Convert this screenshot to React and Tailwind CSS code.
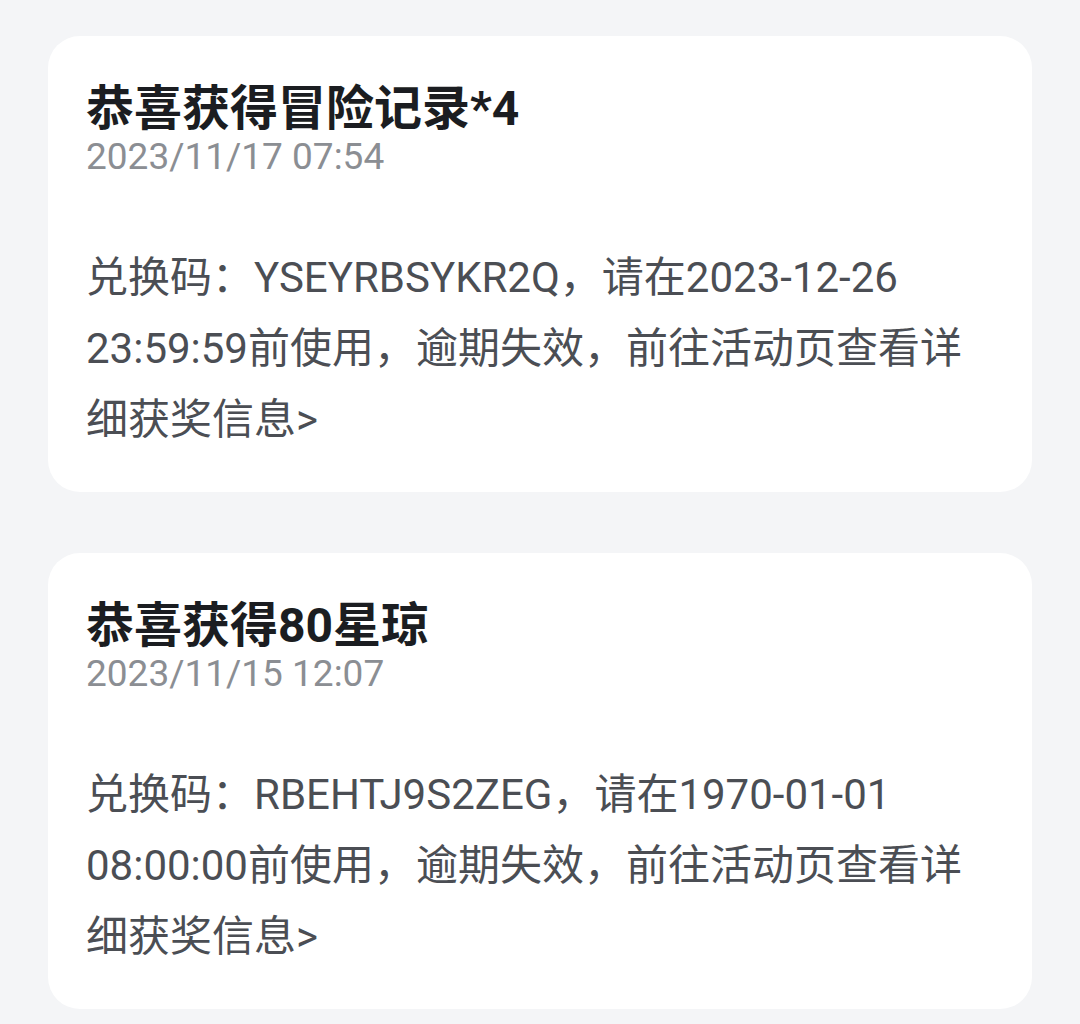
import React from "react";

const messages = [
  {
    title: "恭喜获得冒险记录*4",
    time: "2023/11/17 07:54",
    body: "兑换码：YSEYRBSYKR2Q，请在2023-12-26 23:59:59前使用，逾期失效，前往活动页查看详细获奖信息>",
  },
  {
    title: "恭喜获得80星琼",
    time: "2023/11/15 12:07",
    body: "兑换码：RBEHTJ9S2ZEG，请在1970-01-01 08:00:00前使用，逾期失效，前往活动页查看详细获奖信息>",
  },
];

export default function App() {
  return (
    <div
      className="min-h-screen bg-[#f4f5f7] px-[48px] pt-[36px] flex flex-col gap-[61px]"
      style={{ fontFamily: 'Roboto, "Noto Sans CJK SC", sans-serif' }}
    >
      {messages.map((m) => (
        <div key={m.time} className="bg-white rounded-[32px] pl-[38px] pr-[50px] pt-[45px] pb-[37px]">
          <h2 className="text-[48px] leading-[56px] font-bold text-[#1b1d21]">{m.title}</h2>
          <p className="text-[37px] leading-[40px] text-[#8b8e93]">{m.time}</p>
          <p className="mt-[65px] text-[42px] leading-[71px] text-[#4b4e54]">{m.body}</p>
        </div>
      ))}
    </div>
  );
}
